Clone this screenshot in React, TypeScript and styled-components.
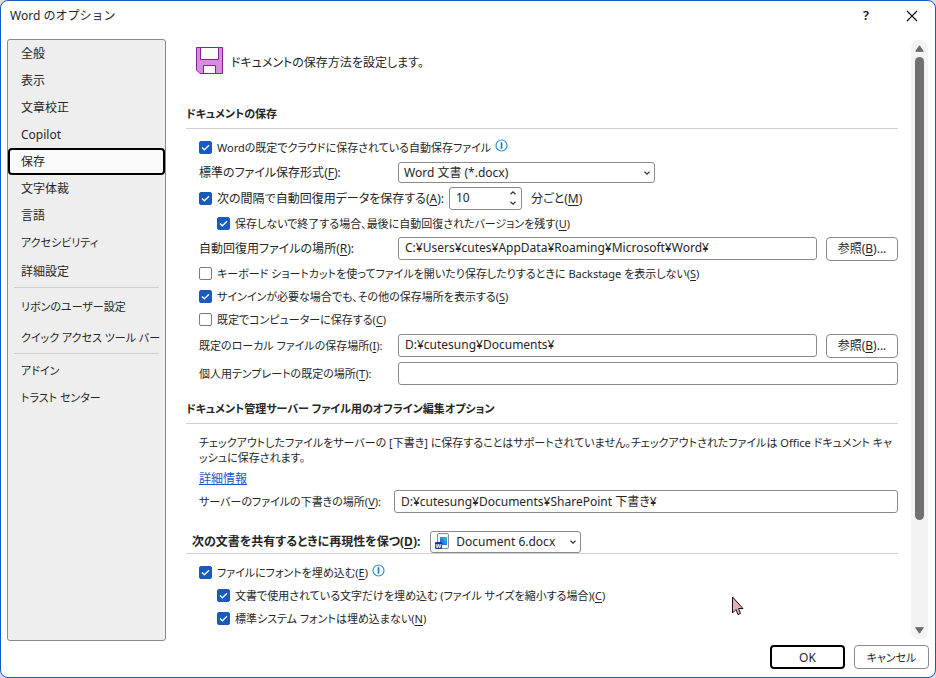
import React, { useState } from "react";
import type { ReactNode } from "react";
import styled, { createGlobalStyle, css } from "styled-components";

const ACCENT = "#185abd";
const GREY = "#8a8a8a";
const RULE = "#cfcfcf";

const GlobalStyle = createGlobalStyle`
  *, *::before, *::after { box-sizing: border-box; }
  body {
    margin: 0;
    background: #dcdcdc;
    color: #262626;
    font: 12px/15px "Noto Sans", "Noto Sans CJK JP", sans-serif;
    font-feature-settings: "palt";
  }
  button, input, select { font: inherit; font-feature-settings: inherit; color: inherit; }
  u { text-underline-offset: 2px; }
`;

const Dialog = styled.div`
  position: relative;
  display: flex;
  flex-direction: column;
  min-height: 100vh;
  background: #fff;
  border: 1px solid ${ACCENT};
  border-radius: 8px;
  overflow: hidden;
`;

const TitleBar = styled.header`
  display: flex;
  align-items: center;
  height: 38px;
  padding: 0 0 9px 9px;
`;

const Title = styled.h1`
  flex: 1;
  margin: 0;
  font-size: 12px;
  font-weight: 400;
  font-feature-settings: normal;
`;

const TitleButton = styled.button`
  display: grid;
  place-items: center;
  width: 46px;
  height: 28px;
  padding: 0;
  border: 0;
  background: none;
  color: #111;
  font-size: 13px;
  font-weight: 600;
`;

const Body = styled.div`
  display: flex;
  flex: 1;
  padding: 0 7px 0 6px;
`;

const Sidebar = styled.nav`
  flex: none;
  width: 159px;
  border: 1px solid ${GREY};
  border-radius: 3px;
  background: #eee;
`;

const NavItem = styled.button<{ $tall?: boolean; $compact?: boolean; $selected?: boolean }>`
  display: block;
  width: 100%;
  height: ${(p) => (p.$tall ? 31 : 27)}px;
  padding: 0 11px;
  border: 2px solid ${(p) => (p.$selected ? "#000" : "transparent")};
  border-radius: 4px;
  background: ${(p) => (p.$selected ? "#fafafa" : "transparent")};
  font-size: ${(p) => (p.$compact ? 11 : 12)}px;
  text-align: left;
  white-space: nowrap;
`;

const NavRule = styled.hr`
  height: 1px;
  margin: 0 6px 3px;
  border: 0;
  background: ${RULE};
`;

const Main = styled.main`
  flex: 1;
  min-width: 0;
  padding: 8px 13px 0 20px;
`;

const Intro = styled.div`
  display: flex;
  align-items: center;
  gap: 8px;
  height: 27px;
  margin: 0 0 24px 10px;
  font-size: 12px;

  p { margin: 4px 0 0; }
`;

const SectionTitle = styled.h2`
  display: flex;
  align-items: center;
  height: 31px;
  margin: 0 0 5px;
  border-bottom: 1px solid ${RULE};
  font-size: 11px;
  font-weight: 700;
`;

const SubjectTitle = styled(SectionTitle)`
  height: 24px;
  margin: 17px 0 6px;
  padding-left: 6px;
  gap: 10px;
  font-size: 12px;
`;

const Group = styled.div`
  padding-left: 13px;
  margin-bottom: 6px;
`;

const Row = styled.div<{ $height: number; $indent?: boolean }>`
  display: flex;
  align-items: center;
  height: ${(p) => p.$height}px;
  padding-left: ${(p) => (p.$indent ? 18 : 0)}px;
  white-space: nowrap;
`;

const FieldLabel = styled.label<{ $width: number; $compact?: boolean }>`
  flex: none;
  width: ${(p) => p.$width}px;
  font-size: ${(p) => (p.$compact ? 11 : 12)}px;
`;

const CheckLabel = styled.label<{ $width?: number; $compact?: boolean }>`
  display: flex;
  align-items: center;
  gap: 5px;
  flex: none;
  font-size: ${(p) => (p.$compact ? 11 : 12)}px;
  ${(p) => p.$width && css`width: ${p.$width}px;`}
`;

const Stack = styled.span`
  display: inline-grid;
  align-items: center;

  > * { grid-area: 1 / 1; }
  > svg { pointer-events: none; }
`;

const Tick = styled.input`
  appearance: none;
  width: 13px;
  height: 13px;
  margin: 0;
  border: 1px solid #7a7a7a;
  border-radius: 2px;
  background: #fff;

  &:checked { border-color: ${ACCENT}; background: ${ACCENT}; }
  &:not(:checked) + svg { visibility: hidden; }
`;

const field = css`
  border: 1px solid ${GREY};
  border-radius: 3px;
  background: #fff;
  font-size: 12px;
  outline: 0;
`;

const TextBox = styled.input`
  ${field}
  flex: 1;
  min-width: 0;
  height: 23px;
  padding: 0 6px 2px;
`;

const SelectStack = styled(Stack)<{ $width: number }>`
  flex: none;
  width: ${(p) => p.$width}px;
  font-weight: 400;

  > .chevron { justify-self: end; margin-right: 4px; }
  > .file { margin-left: 5px; }
`;

const Select = styled.select<{ $withIcon?: boolean }>`
  ${field}
  appearance: none;
  width: 100%;
  height: ${(p) => (p.$withIcon ? 22 : 21)}px;
  padding: 0 18px 0 ${(p) => (p.$withIcon ? 25 : 5)}px;
`;

const Spin = styled.div`
  ${field}
  display: flex;
  width: 73px;
  height: 23px;
  margin-right: 9px;
`;

const SpinInput = styled.input`
  flex: 1;
  min-width: 0;
  padding: 0 6px 1px;
  border: 0;
  background: none;
  outline: 0;
`;

const SpinArrows = styled.span`
  display: flex;
  flex-direction: column;
  width: 16px;
`;

const SpinArrow = styled.button`
  display: grid;
  place-items: center;
  flex: 1;
  padding: 0;
  border: 0;
  background: none;
`;

const PushButton = styled.button<{ $default?: boolean; $compact?: boolean }>`
  flex: none;
  width: 75px;
  height: 24px;
  padding: 0;
  border: ${(p) => (p.$default ? "2px solid #000" : `1px solid ${GREY}`)};
  border-radius: 4px;
  background: #fff;
  font-size: ${(p) => (p.$compact ? 11 : 12)}px;
`;

const BrowseButton = styled(PushButton)`
  width: 72px;
  margin-left: 9px;
`;

const InfoButton = styled.button`
  display: grid;
  margin: 0 0 3px 4px;
  padding: 0;
  border: 0;
  background: none;
`;

const Note = styled.p`
  margin: 11px 0 5px;
  font-size: 11px;
`;

const Link = styled.a`
  display: block;
  width: max-content;
  margin-bottom: 3px;
  color: ${ACCENT};
  line-height: 17px;
`;

const ScrollBar = styled.div`
  display: flex;
  flex-direction: column;
  align-items: center;
  flex: none;
  width: 17px;
  margin: 1px 0 2px;
  padding: 5px 0;
  border-radius: 8px;
  background: #f3f3f3;
`;

const ScrollTrack = styled.div`
  flex: 1;
  width: 9px;
  margin: 5px 0;
`;

const ScrollThumb = styled.div`
  height: 82%;
  border-radius: 5px;
  background: #707070;
`;

const Footer = styled.footer`
  display: flex;
  justify-content: flex-end;
  gap: 9px;
  padding: 4px 6px 8px;
`;

const Pointer = styled.svg`
  position: absolute;
  left: 730px;
  top: 595px;
  pointer-events: none;
`;

const FloppyIcon = () => (
  <svg width="27" height="27" viewBox="0 0 27 27" aria-hidden="true">
    <path d="M.5.5h26v26H4L.5 23z" fill="#d38fdb" stroke="#8d1f96" />
    <path d="M4.500.5h18v12h-18z" fill="#fafafa" stroke="#8d1f96" />
    <path d="M7.500 26.500v-8h12v8z" fill="#fafafa" stroke="#8d1f96" />
  </svg>
);

const InfoIcon = () => (
  <svg width="13" height="13" viewBox="0 0 13 13" aria-hidden="true">
    <circle cx="6.500" cy="6.500" r="5.500" fill="#fff" stroke="#2e93cf" strokeWidth="1.200" />
    <path d="M6.500 3.200v6.500" stroke="#1e7fc0" strokeWidth="1.700" />
  </svg>
);

const Chevron = ({ up, className }: { up?: boolean; className?: string }) => (
  <svg className={className} width="8" height="6" viewBox="0 0 8 6" aria-hidden="true">
    <path d={up ? "M1.500 4.200 4 1.800l2.500 2.400" : "M1.500 1.800 4 4.200l2.500-2.400"} fill="none" stroke="#333" strokeWidth="1.200" />
  </svg>
);

const WordFileIcon = () => (
  <svg className="file" width="15" height="17" viewBox="0 0 15 17" aria-hidden="true">
    <defs>
      <linearGradient id="page" x1="0" y1="1" x2="1" y2="0">
        <stop offset="0" stopColor="#1a4fc4" />
        <stop offset="1" stopColor="#35c4f5" />
      </linearGradient>
    </defs>
    <rect x="2.500" y=".5" width="11" height="15" rx="1.500" fill="#f8f8f8" stroke="#8c8c8c" />
    <rect x="5" y="4" width="7" height="8" fill="url(#page)" />
    <rect x="0" y="9" width="7" height="7" rx="1" fill="#103f91" />
    <text x="3.500" y="15" textAnchor="middle" fontSize="6" fontWeight="700" fill="#fff">W</text>
  </svg>
);

const Triangle = ({ up }: { up?: boolean }) => (
  <svg width="9" height="7" viewBox="0 0 9 7" aria-hidden="true">
    <path d={up ? "M4.500.8 8.300 6.300H.7z" : "M4.500 6.200 8.300.7H.7z"} fill="#6a6a6a" stroke="#6a6a6a" strokeLinejoin="round" />
  </svg>
);

type CheckBoxProps = { checked?: boolean; compact?: boolean; width?: number; children: ReactNode };

function CheckBox({ checked, compact, width, children }: CheckBoxProps) {
  return (
    <CheckLabel $width={width} $compact={compact}>
      <Stack>
        <Tick type="checkbox" defaultChecked={checked} />
        <svg width="13" height="13" viewBox="0 0 13 13" aria-hidden="true">
          <path d="M3 6.500 5.400 8.800 10 4.200" fill="none" stroke="#fff" strokeWidth="1.300" />
        </svg>
      </Stack>
      <span>{children}</span>
    </CheckLabel>
  );
}

const Info = () => (
  <InfoButton aria-label="情報">
    <InfoIcon />
  </InfoButton>
);

const NAV: { name: string; tall?: boolean; compact?: boolean; ruleAfter?: boolean }[] = [
  { name: "全般" },
  { name: "表示" },
  { name: "文章校正" },
  { name: "Copilot" },
  { name: "保存" },
  { name: "文字体裁" },
  { name: "言語" },
  { name: "アクセシビリティ", compact: true },
  { name: "詳細設定", tall: true, ruleAfter: true },
  { name: "リボンのユーザー設定", tall: true, compact: true },
  { name: "クイック アクセス ツール バー", tall: true, compact: true, ruleAfter: true },
  { name: "アドイン", compact: true },
  { name: "トラスト センター", compact: true },
];

export default function App() {
  const [page, setPage] = useState("保存");
  const [minutes, setMinutes] = useState(10);

  return (
    <>
      <GlobalStyle />
      <Dialog role="dialog" aria-labelledby="dialog-title">
        <TitleBar>
          <Title id="dialog-title">Word のオプション</Title>
          <TitleButton aria-label="ヘルプ">?</TitleButton>
          <TitleButton aria-label="閉じる">
            <svg width="12" height="12" viewBox="0 0 12 12" aria-hidden="true">
              <path d="M1 1l10 10M11 1 1 11" stroke="#111" strokeWidth="1.200" />
            </svg>
          </TitleButton>
        </TitleBar>

        <Body>
          <Sidebar>
            {NAV.map((item) => (
              <React.Fragment key={item.name}>
                <NavItem
                  $tall={item.tall}
                  $compact={item.compact}
                  $selected={item.name === page}
                  onClick={() => setPage(item.name)}
                >
                  {item.name}
                </NavItem>
                {item.ruleAfter && <NavRule />}
              </React.Fragment>
            ))}
          </Sidebar>

          <Main>
            <Intro>
              <FloppyIcon />
              <p>ドキュメントの保存方法を設定します。</p>
            </Intro>

            <SectionTitle>ドキュメントの保存</SectionTitle>
            <Group>
              <Row $height={26}>
                <CheckBox checked compact>Wordの既定でクラウドに保存されている自動保存ファイル</CheckBox>
                <Info />
              </Row>
              <Row $height={25}>
                <FieldLabel htmlFor="format" $width={199}>標準のファイル保存形式(<u>F</u>):</FieldLabel>
                <SelectStack $width={257}>
                  <Select id="format"><option>Word 文書 (*.docx)</option></Select>
                  <Chevron className="chevron" />
                </SelectStack>
              </Row>
              <Row $height={26}>
                <CheckBox checked width={250}>次の間隔で自動回復用データを保存する(<u>A</u>):</CheckBox>
                <Spin>
                  <SpinInput id="minutes" value={minutes} onChange={(e) => setMinutes(Number(e.target.value) || 0)} />
                  <SpinArrows>
                    <SpinArrow aria-label="増やす" onClick={() => setMinutes(minutes + 1)}><Chevron up /></SpinArrow>
                    <SpinArrow aria-label="減らす" onClick={() => setMinutes(Math.max(1, minutes - 1))}><Chevron /></SpinArrow>
                  </SpinArrows>
                </Spin>
                <label htmlFor="minutes">分ごと(<u>M</u>)</label>
              </Row>
              <Row $height={24} $indent>
                <CheckBox checked compact>保存しないで終了する場合、最後に自動回復されたバージョンを残す(<u>U</u>)</CheckBox>
              </Row>
              <Row $height={27}>
                <FieldLabel htmlFor="recover" $width={199}>自動回復用ファイルの場所(<u>R</u>):</FieldLabel>
                <TextBox id="recover" defaultValue="C:¥Users¥cutes¥AppData¥Roaming¥Microsoft¥Word¥" />
                <BrowseButton>参照(<u>B</u>)...</BrowseButton>
              </Row>
              <Row $height={23}>
                <CheckBox compact>キーボード ショートカットを使ってファイルを開いたり保存したりするときに Backstage を表示しない(<u>S</u>)</CheckBox>
              </Row>
              <Row $height={23}>
                <CheckBox checked compact>サインインが必要な場合でも、その他の保存場所を表示する(<u>S</u>)</CheckBox>
              </Row>
              <Row $height={23}>
                <CheckBox compact>既定でコンピューターに保存する(<u>C</u>)</CheckBox>
              </Row>
              <Row $height={29}>
                <FieldLabel htmlFor="local" $width={199} $compact>既定のローカル ファイルの保存場所(<u>I</u>):</FieldLabel>
                <TextBox id="local" defaultValue="D:¥cutesung¥Documents¥" />
                <BrowseButton>参照(<u>B</u>)...</BrowseButton>
              </Row>
              <Row $height={27}>
                <FieldLabel htmlFor="template" $width={199} $compact>個人用テンプレートの既定の場所(<u>T</u>):</FieldLabel>
                <TextBox id="template" />
              </Row>
            </Group>

            <SectionTitle>ドキュメント管理サーバー ファイル用のオフライン編集オプション</SectionTitle>
            <Group>
              <Note>
                チェックアウトしたファイルをサーバーの [下書き] に保存することはサポートされていません。チェックアウトされたファイルは Office ドキュメント キャッシュに保存されます。
              </Note>
              <Link href="#details">詳細情報</Link>
              <Row $height={23}>
                <FieldLabel htmlFor="drafts" $width={195} $compact>サーバーのファイルの下書きの場所(<u>V</u>):</FieldLabel>
                <TextBox id="drafts" defaultValue="D:¥cutesung¥Documents¥SharePoint 下書き¥" />
              </Row>
            </Group>

            <SubjectTitle>
              <label htmlFor="document">次の文書を共有するときに再現性を保つ(<u>D</u>):</label>
              <SelectStack $width={151}>
                <Select id="document" $withIcon><option>Document 6.docx</option></Select>
                <WordFileIcon />
                <Chevron className="chevron" />
              </SelectStack>
            </SubjectTitle>
            <Group>
              <Row $height={24}>
                <CheckBox checked compact>ファイルにフォントを埋め込む(<u>E</u>)</CheckBox>
                <Info />
              </Row>
              <Row $height={23} $indent>
                <CheckBox checked compact>文書で使用されている文字だけを埋め込む (ファイル サイズを縮小する場合)(<u>C</u>)</CheckBox>
              </Row>
              <Row $height={23} $indent>
                <CheckBox checked compact>標準システム フォントは埋め込まない(<u>N</u>)</CheckBox>
              </Row>
            </Group>
          </Main>

          <ScrollBar aria-hidden="true">
            <Triangle up />
            <ScrollTrack>
              <ScrollThumb />
            </ScrollTrack>
            <Triangle />
          </ScrollBar>
        </Body>

        <Footer>
          <PushButton $default>OK</PushButton>
          <PushButton $compact>キャンセル</PushButton>
        </Footer>

        <Pointer width="14" height="20" viewBox="0 0 14 20" aria-hidden="true">
          <path d="M1.500 1v16l3.500-3.500L7 18.500l2.500-1L7.500 12.500H12z" fill="#e6b0b0" stroke="#111" />
        </Pointer>
      </Dialog>
    </>
  );
}
